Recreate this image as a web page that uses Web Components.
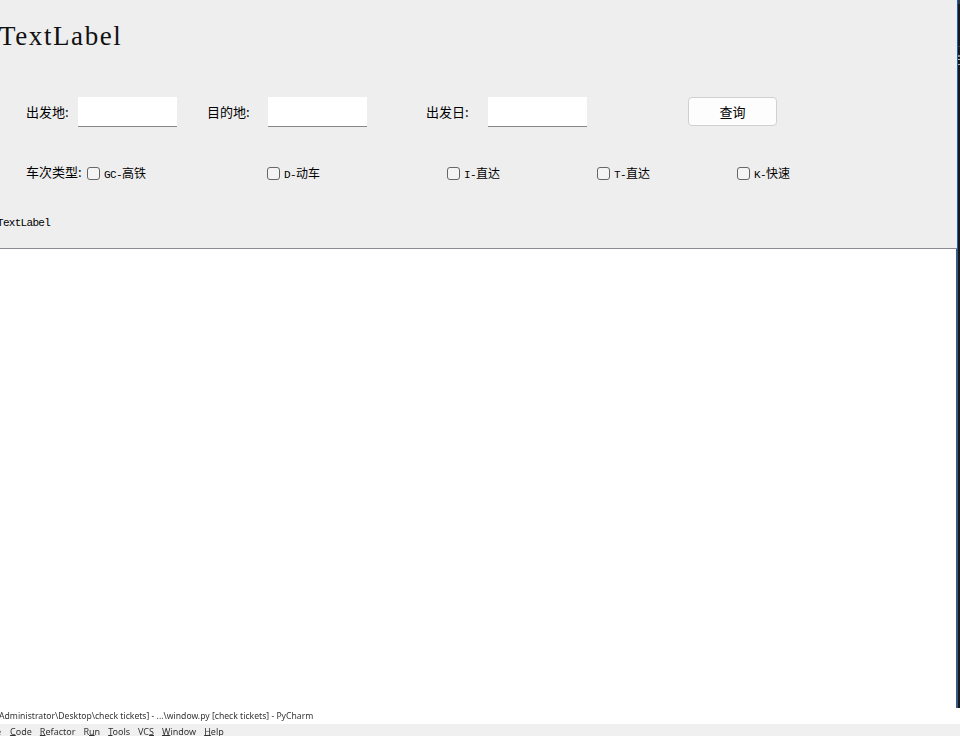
<!DOCTYPE html>
<html>
<head>
<meta charset="utf-8">
<title>check tickets</title>
<style>
  html, body { margin: 0; height: 100%; background: #fff; overflow: hidden; }
</style>
</head>
<body>
<ticket-window>
  <big-label slot="title">TextLabel</big-label>
  <query-row slot="query"></query-row>
  <type-row slot="types"></type-row>
  <small-label slot="status">TextLabel</small-label>
</ticket-window>
<ide-strip></ide-strip>

<script>
// Large heading label at the top of the form
class BigLabel extends HTMLElement {
  constructor() {
    super();
    this.attachShadow({ mode: 'open' });
    this.shadowRoot.innerHTML = `
      <style>
        :host { display: block; font: 27px/27px "Liberation Serif", serif; letter-spacing: 1.6px; color: #111; white-space: nowrap; }
      </style>
      <slot></slot>
    `;
  }
}

// Status label over the table
class SmallLabel extends HTMLElement {
  constructor() {
    super();
    this.attachShadow({ mode: 'open' });
    this.shadowRoot.innerHTML = `
      <style>
        :host { display: block; font: 11px/10px "Liberation Mono", monospace; letter-spacing: -.7px; color: #000; white-space: nowrap; }
      </style>
      <slot></slot>
    `;
  }
}

// Line edit with the bottom accent line
class LineEdit extends HTMLElement {
  constructor() {
    super();
    this.attachShadow({ mode: 'open' });
    this.shadowRoot.innerHTML = `
      <style>
        :host { display: block; width: 99px; height: 30px; box-sizing: border-box; background: #fff; border-bottom: 1px solid #868686; }
      </style>
    `;
  }
}

class PushButton extends HTMLElement {
  constructor() {
    super();
    this.attachShadow({ mode: 'open' });
    this.shadowRoot.innerHTML = `
      <style>
        :host { display: flex; align-items: center; justify-content: center; align-self: start; width: 89px; height: 29px; box-sizing: border-box; background: #fdfdfd; border: 1px solid #d0d0d0; border-radius: 4px; font: 13px/17px "Noto Sans CJK SC", sans-serif; color: #000; }
      </style>
      <slot></slot>
    `;
  }
}

// Checkbox: latin code in half-width cells, name in 12px CJK
class CheckItem extends HTMLElement {
  constructor() {
    super();
    this.attachShadow({ mode: 'open' });
    this.shadowRoot.innerHTML = `
      <style>
        :host { display: flex; align-items: center; gap: 4px; height: 17px; font: 12px/17px "Noto Sans CJK SC", sans-serif; color: #000; white-space: nowrap; }
        .box { width: 13px; height: 13px; box-sizing: border-box; background: #f4f4f4; border: 1px solid #666; border-radius: 3px; flex: none; }
        .code { font: 11px/17px "Liberation Mono", monospace; letter-spacing: -.6px; }
      </style>
      <span class="box"></span>
      <span><span class="code">${this.getAttribute('code')}</span>${this.getAttribute('name')}</span>
    `;
  }
}

class QueryRow extends HTMLElement {
  constructor() {
    super();
    this.attachShadow({ mode: 'open' });
    this.shadowRoot.innerHTML = `
      <style>
        :host { display: grid; grid-template-columns: 78px 99px 91px 99px 121px 99px 101px 89px; align-items: center; height: 30px; font: 13px/17px "Noto Sans CJK SC", sans-serif; color: #000; }
        span { padding-left: 26px; margin-bottom: 2px; white-space: nowrap; }
        .mid { padding-left: 30px; }
        .far { padding-left: 59px; }
      </style>
      <span>出发地:</span><line-edit></line-edit>
      <span class="mid">目的地:</span><line-edit></line-edit>
      <span class="far">出发日:</span><line-edit></line-edit>
      <i></i><push-button>查询</push-button>
    `;
  }
}

class TypeRow extends HTMLElement {
  constructor() {
    super();
    this.attachShadow({ mode: 'open' });
    this.shadowRoot.innerHTML = `
      <style>
        :host { display: grid; grid-template-columns: 87px 180px 180px 150px 140px 1fr; grid-template-rows: 17px; align-items: center; height: 17px; font: 13px/17px "Noto Sans CJK SC", sans-serif; color: #000; }
        span { padding-left: 26px; margin-bottom: 4px; white-space: nowrap; }
      </style>
      <span>车次类型:</span>
      <check-item code="GC-" name="高铁"></check-item>
      <check-item code="D-" name="动车"></check-item>
      <check-item code="I-" name="直达"></check-item>
      <check-item code="T-" name="直达"></check-item>
      <check-item code="K-" name="快速"></check-item>
    `;
  }
}

// Sliver of the window behind, blue frame and dark editor with a few ticks
class WindowEdge extends HTMLElement {
  constructor() {
    super();
    this.attachShadow({ mode: 'open' });
    this.shadowRoot.innerHTML = `
      <style>
        :host { display: block; width: 3px; flex: none; box-sizing: border-box; border-left: 1px solid #1a5fb4; background:
          linear-gradient(#2c3a48 0 4px, transparent 4px),
          linear-gradient(transparent 46px, #3a3a3a 46px 47px, transparent 47px),
          linear-gradient(transparent 55px, #8c8c8c 55px 57px, transparent 57px),
          linear-gradient(transparent 59px, #bbb 59px 60px, transparent 60px),
          linear-gradient(transparent 64px, #aaa 64px 65px, transparent 65px),
          #17181a; }
      </style>
    `;
  }
}

// Top grey panel and the white result area under it
class TicketWindow extends HTMLElement {
  constructor() {
    super();
    this.attachShadow({ mode: 'open' });
    this.shadowRoot.innerHTML = `
      <style>
        :host { display: flex; height: 708px; }
        .main { flex: 1; min-width: 0; display: flex; flex-direction: column; }
        .panel { height: 249px; box-sizing: border-box; background: #eee; border-bottom: 1px solid #8b8b94; display: flex; flex-direction: column; }
        .title { height: 97px; padding-top: 23px; box-sizing: border-box; margin-left: -1px; }
        .query { height: 30px; }
        .types { margin-top: 38px; height: 17px; }
        .status { margin-top: 36px; margin-left: -3px; }
        .table { flex: 1; background: #fff; border-right: 1px solid #555; }
      </style>
      <div class="main">
        <div class="panel">
          <div class="title"><slot name="title"></slot></div>
          <div class="query"><slot name="query"></slot></div>
          <div class="types"><slot name="types"></slot></div>
          <div class="status"><slot name="status"></slot></div>
        </div>
        <div class="table"></div>
      </div>
      <window-edge></window-edge>
    `;
  }
}

// Blurry bit of the desktop visible under the window
class IdeStrip extends HTMLElement {
  constructor() {
    super();
    this.attachShadow({ mode: 'open' });
    this.shadowRoot.innerHTML = `
      <style>
        :host { display: block; height: 28px; background: #fff; font: 9px "Noto Sans", sans-serif; color: #333; overflow: hidden; filter: blur(.2px); }
        .caption { height: 16px; line-height: 17px; font-size: 8.65px; white-space: nowrap; margin-left: -1px; }
        .menu { height: 12px; background: #f0f0f0; display: flex; gap: 8px; line-height: 15px; white-space: nowrap; }
        .cut { margin-left: -4px; margin-right: 1px; }
        u { text-underline-offset: 0; text-decoration-thickness: 1px; }
      </style>
      <div class="caption">Administrator\\Desktop\\check tickets] - ...\\window.py [check tickets] - PyCharm</div>
      <div class="menu">
        <span class="cut">e</span>
        <span><u>C</u>ode</span>
        <span><u>R</u>efactor</span>
        <span>R<u>u</u>n</span>
        <span><u>T</u>ools</span>
        <span>VC<u>S</u></span>
        <span><u>W</u>indow</span>
        <span><u>H</u>elp</span>
      </div>
    `;
  }
}

customElements.define('big-label', BigLabel);
customElements.define('small-label', SmallLabel);
customElements.define('line-edit', LineEdit);
customElements.define('push-button', PushButton);
customElements.define('check-item', CheckItem);
customElements.define('query-row', QueryRow);
customElements.define('type-row', TypeRow);
customElements.define('window-edge', WindowEdge);
customElements.define('ticket-window', TicketWindow);
customElements.define('ide-strip', IdeStrip);
</script>
</body>
</html>
